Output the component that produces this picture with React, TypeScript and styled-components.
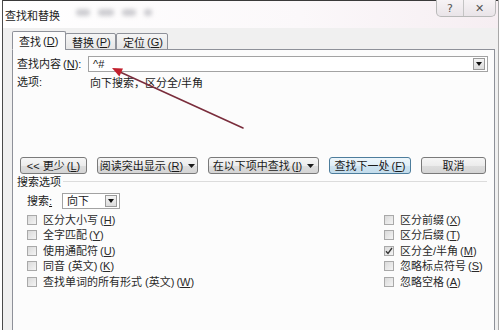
import React from 'react';
import styled, { createGlobalStyle } from 'styled-components';

const GlobalStyle = createGlobalStyle`
  html, body { margin: 0; padding: 0; background: #ffffff; }
  body {
    font-family: "Liberation Sans", "Noto Sans CJK SC", sans-serif;
    font-size: 11px;
    color: #1a1a1a;
  }
  * { box-sizing: border-box; }
`;

const Window = styled.div`
  position: relative;
  width: 497px;
  height: 330px;
  margin-left: 2px;
  overflow: hidden;
  display: flex;
  flex-direction: column;
  background: #f0f0f0;
  border-left: 1px solid #4a4a4a;
  border-right: 1px solid #a8a8a8;
`;

const TitleBar = styled.div`
  position: relative;
  height: 28px;
  flex: none;
  display: flex;
  align-items: center;
  padding-left: 2px;
  border-top: 1px solid #3a3a3a;
  background: linear-gradient(90deg, #ffffff 0%, #fbf8fa 60%, #f6eef2 100%);
  font-size: 11px;
  color: #222;
`;

const Ghost = styled.span<{ $w: number }>`
  display: inline-block;
  width: ${(p) => p.$w}px;
  height: 7px;
  margin-left: 8px;
  background: #b8b8be;
  border-radius: 3px;
  filter: blur(2px);
  opacity: 0.7;
`;

const Ghosts = styled.div`
  display: flex;
  align-items: center;
  margin-left: 8px;
  margin-top: -4px;
`;

const Caption = styled.div`
  position: absolute;
  top: -1px;
  right: 2px;
  display: flex;
  height: 17px;
  border: 1px solid #b9b9b9;
  border-top: none;
  border-radius: 0 0 5px 5px;
  background: linear-gradient(#f7f3f5, #e9e4e8);
  overflow: hidden;
`;

const CaptionButton = styled.div<{ $w: number }>`
  width: ${(p) => p.$w}px;
  display: flex;
  align-items: center;
  justify-content: center;
  font-family: "DejaVu Sans", sans-serif;
  font-size: 11px;
  color: #555;
  & + & { border-left: 1px solid #c4c4c4; }
`;

const Body = styled.div`
  flex: 1;
  display: flex;
  flex-direction: column;
  padding: 4px 3px 0 9px;
`;

const TabStrip = styled.div`
  display: flex;
  align-items: flex-end;
  height: 18px;
  margin-bottom: -1px;
  position: relative;
  z-index: 1;
`;

const Tab = styled.div<{ $active?: boolean; $w: number }>`
  width: ${(p) => p.$w}px;
  height: ${(p) => (p.$active ? 19 : 17)}px;
  padding-left: 6px;
  display: flex;
  align-items: center;
  border: 1px solid #8e9199;
  border-bottom: ${(p) => (p.$active ? '1px solid #fcfcfc' : '1px solid #8e9199')};
  border-radius: 2px 2px 0 0;
  background: ${(p) => (p.$active ? '#fcfcfc' : 'linear-gradient(#f5f5f5, #e6e6e6)')};
  margin-right: ${(p) => (p.$active ? -1 : 0)}px;
`;

const Panel = styled.div`
  flex: 1;
  display: flex;
  flex-direction: column;
  padding: 6px 6px 0 4px;
  border: 1px solid #8e9199;
  border-bottom: none;
  background: #fcfcfc;
`;

const Row = styled.div<{ $mt?: number; $indent?: number }>`
  display: flex;
  align-items: center;
  margin-top: ${(p) => p.$mt ?? 0}px;
  padding-left: ${(p) => p.$indent ?? 0}px;
`;

const Label = styled.div<{ $w: number }>`
  width: ${(p) => p.$w}px;
  flex: none;
  white-space: nowrap;
  line-height: 14px;
`;

const Combo = styled.div<{ $w?: number }>`
  ${(p) => (p.$w ? `width: ${p.$w}px;` : 'flex: 1;')}
  height: 16px;
  display: flex;
  align-items: center;
  justify-content: space-between;
  padding: 0 2px 0 4px;
  border: 1px solid #a3a3a3;
  background: #ffffff;
  line-height: 14px;
`;

const DropButton = styled.div`
  width: 12px;
  height: 12px;
  display: flex;
  align-items: center;
  justify-content: center;
  border: 1px solid #9a9a9a;
  background: linear-gradient(#f4f4f4, #dcdcdc);
`;

const ButtonBar = styled.div`
  display: flex;
  gap: 10px;
  margin-top: 67px;
  padding-left: 3px;
`;

const Button = styled.div<{ $w: number; $default?: boolean }>`
  width: ${(p) => p.$w}px;
  height: 17px;
  display: flex;
  align-items: center;
  justify-content: center;
  border: 1px solid ${(p) => (p.$default ? '#4d7d9c' : '#7a7a7a')};
  border-radius: 3px;
  background: ${(p) =>
    p.$default
      ? 'linear-gradient(#eef6fb, #dfeef7 50%, #cfe4f1 51%, #c3dceb)'
      : 'linear-gradient(#f6f6f6, #ececec 50%, #dedede 51%, #d4d4d4)'};
  white-space: nowrap;
  line-height: 14px;
`;

const Caret = styled.svg`
  margin-left: 5px;
  flex: none;
`;

const Mnemonic = styled.span`
  margin-left: 2px;
`;

const Mn = styled.span`
  text-decoration: underline;
  text-underline-offset: 1px;
`;

const GroupHeader = styled.div`
  display: flex;
  align-items: center;
  gap: 2px;
  margin-top: 2px;
  line-height: 13px;
  &::after {
    content: '';
    flex: 1;
    height: 1px;
    margin-top: -3px;
    margin-right: 1px;
    background: #dcdcdc;
  }
`;

const Options = styled.div`
  display: grid;
  grid-template-columns: 357px auto;
  grid-template-rows: repeat(5, 15.5px);
  grid-auto-flow: column;
  margin-top: 3px;
  padding-left: 10px;
`;

const Check = styled.div`
  display: flex;
  align-items: center;
  gap: 6px;
  white-space: nowrap;
  color: #2a2a2a;
  line-height: 14px;
`;

const Box = styled.span`
  width: 10px;
  height: 10px;
  flex: none;
  display: flex;
  align-items: center;
  justify-content: center;
  border: 1px solid #a9a9a9;
  background: linear-gradient(135deg, #dadada, #f4f4f4);
`;

const Overlay = styled.svg`
  position: absolute;
  left: -3px;
  top: 0;
  pointer-events: none;
`;

function M({ c }: { c: string }) {
  return (
    <Mnemonic>
      (<Mn>{c}</Mn>)
    </Mnemonic>
  );
}

function Tri() {
  return (
    <Caret width={7} height={4} viewBox="0 0 7 4">
      <path d="M0 0 H7 L3.5 4 Z" fill="#1a1a1a" />
    </Caret>
  );
}

function DropArrow() {
  return (
    <DropButton>
      <svg width="6" height="4" viewBox="0 0 6 4">
        <path d="M0 0 H6 L3 4 Z" fill="#111" />
      </svg>
    </DropButton>
  );
}

const leftOptions: [string, string][] = [
  ['区分大小写', 'H'],
  ['全字匹配', 'Y'],
  ['使用通配符', 'U'],
  ['同音 (英文)', 'K'],
  ['查找单词的所有形式 (英文)', 'W'],
];

const rightOptions: [string, string, boolean][] = [
  ['区分前缀', 'X', false],
  ['区分后缀', 'T', false],
  ['区分全/半角', 'M', true],
  ['忽略标点符号', 'S', false],
  ['忽略空格', 'A', false],
];

export default function App() {
  return (
    <>
      <GlobalStyle />
      <Window>
        <TitleBar>
          查找和替换
          <Ghosts>
            <Ghost $w={14} />
            <Ghost $w={16} />
            <Ghost $w={14} />
            <Ghost $w={8} />
          </Ghosts>
          <Caption>
            <CaptionButton $w={26}>?</CaptionButton>
            <CaptionButton $w={32}>✕</CaptionButton>
          </Caption>
        </TitleBar>
        <Body>
          <TabStrip>
            <Tab $active $w={54}>
              查找<M c="D" />
            </Tab>
            <Tab $w={51}>
              替换<M c="P" />
            </Tab>
            <Tab $w={52}>
              定位<M c="G" />
            </Tab>
          </TabStrip>
          <Panel>
            <Row>
              <Label $w={71}>
                查找内容<M c="N" />:
              </Label>
              <Combo>
                <span>^#</span>
                <DropArrow />
              </Combo>
            </Row>
            <Row $mt={2}>
              <Label $w={73}>选项:</Label>
              <span>向下搜索，区分全/半角</span>
            </Row>
            <ButtonBar>
              <Button $w={67}>
                &lt;&lt; 更少<M c="L" />
              </Button>
              <Button $w={101}>
                阅读突出显示<M c="R" />
                <Tri />
              </Button>
              <Button $w={111}>
                在以下项中查找<M c="I" />
                <Tri />
              </Button>
              <Button $w={82} $default>
                查找下一处<M c="F" />
              </Button>
              <Button $w={65}>取消</Button>
            </ButtonBar>
            <GroupHeader>搜索选项</GroupHeader>
            <Row $mt={4} $indent={10}>
              <Label $w={35}>
                搜索<Mn>:</Mn>
              </Label>
              <Combo $w={58}>
                <span>向下</span>
                <DropArrow />
              </Combo>
            </Row>
            <Options>
              {leftOptions.map(([t, k]) => (
                <Check key={k}>
                  <Box />
                  <span>
                    {t}
                    <M c={k} />
                  </span>
                </Check>
              ))}
              {rightOptions.map(([t, k, on]) => (
                <Check key={k}>
                  <Box>
                    {on && (
                      <svg width="8" height="8" viewBox="0 0 8 8">
                        <path d="M1 4.2 L3 6.5 L7 1" stroke="#333" strokeWidth="1.3" fill="none" />
                      </svg>
                    )}
                  </Box>
                  <span>
                    {t}
                    <M c={k} />
                  </span>
                </Check>
              ))}
            </Options>
          </Panel>
        </Body>
        <Overlay width="502" height="330" viewBox="0 0 502 330">
          <line x1="243" y1="128" x2="120" y2="72" stroke="#7a2d3c" strokeWidth="1.6" strokeLinecap="round" />
          <polygon points="112,68 123,68.6 119.4,76.5" fill="#c2202e" />
        </Overlay>
      </Window>
    </>
  );
}
